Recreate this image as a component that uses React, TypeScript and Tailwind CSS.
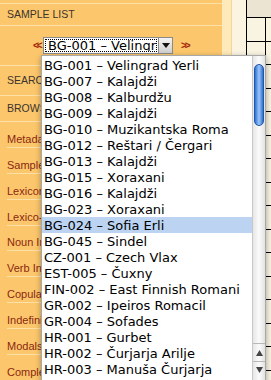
import React from "react";

const samples = [
  "BG-001 – Velingrad Yerli",
  "BG-007 – Kalajdži",
  "BG-008 – Kalburdžu",
  "BG-009 – Kalajdži",
  "BG-010 – Muzikantska Roma",
  "BG-012 – Reštari / Čergari",
  "BG-013 – Kalajdži",
  "BG-015 – Xoraxani",
  "BG-016 – Kalajdži",
  "BG-023 – Xoraxani",
  "BG-024 – Sofia Erli",
  "BG-045 – Sindel",
  "CZ-001 – Czech Vlax",
  "EST-005 – Čuxny",
  "FIN-002 – East Finnish Romani",
  "GR-002 – Ipeiros Romacil",
  "GR-004 – Sofades",
  "HR-001 – Gurbet",
  "HR-002 – Čurjarja Arilje",
  "HR-003 – Manuša Čurjarja",
];

const browse = [
  "Metadata",
  "Samples",
  "Lexicon",
  "Lexico-grammar",
  "Noun Inflection",
  "Verb Inflection",
  "Copula inflection",
  "Indefinites",
  "Modals",
  "Complex clauses",
];

function App() {
  return (
    <div
      className="relative w-[271px] h-[380px] overflow-hidden flex bg-[#f9f3e1]"
      style={{ fontFamily: '"Liberation Sans", Arial, sans-serif' }}
    >
      {/* sidebar */}
      <div className="w-[222px] shrink-0 bg-[#fcc76c] pt-[3px]">
        <div className="h-[23px] border-y border-[#fde0a6] flex items-center px-[7px] text-[10.5px] text-[#3b332c]">
          SAMPLE LIST
        </div>

        <div className="h-[40px] flex items-center pl-[33px] gap-[2px] border-b border-[#fde0a6]">
          <span className="text-[#a3290d] text-[10px] font-bold tracking-[-2px] w-[10px]">&lt;&lt;</span>
          <div className="w-[130px] h-[17px] bg-white border border-[#8a8a8a] flex items-stretch ml-[-2px]">
            <div className="flex-1 overflow-hidden border border-dotted border-black m-[1px] flex items-center pl-[2px] whitespace-nowrap text-[13px] text-black leading-none"
              style={{ fontFamily: '"DejaVu Sans", sans-serif' }}>
              BG-001 – Velingrad Yerli
            </div>
            <div className="w-[14px] bg-gradient-to-b from-[#f4f4f4] to-[#cfcfcf] border-l border-[#8a8a8a] flex items-center justify-center">
              <svg width="8" height="5" viewBox="0 0 8 5"><path d="M0 0h8L4 5z" fill="#111" /></svg>
            </div>
          </div>
          <span className="text-[#a3290d] text-[10px] font-bold tracking-[-2px] ml-[6px]">&gt;&gt;</span>
        </div>

        <div className="h-[30px] flex items-center px-[7px] text-[10.5px] text-[#3b332c] border-b border-[#fde0a6]">
          SEARCH
        </div>
        <div className="h-[26px] flex items-center px-[7px] text-[10.5px] text-[#3b332c] border-b border-[#fde0a6]">
          BROWSE
        </div>

        <div className="px-[7px]">
          {browse.map((b) => (
            <div key={b} className="h-[25.9px] flex items-end border-b border-[#fde0a6] pb-[1px]">
              <span className="text-[11px] leading-[14px] text-[#8b2810] whitespace-nowrap">{b}</span>
            </div>
          ))}
        </div>
      </div>

      {/* stripes */}
      <div className="w-[10px] shrink-0 bg-[#fde9b9] border-r border-[#f4d69a]"></div>
      <div className="w-[15px] shrink-0 bg-[#fbf4e1] border-r border-black"></div>

      {/* table area */}
      <div className="flex-1 flex flex-col">
        <div className="h-[18px] bg-[#ebe4d2] border-b border-black"></div>
        {Array.from({ length: 15 }).map((_, i) => (
          <div key={i} className="h-[23.5px] shrink-0 border-b border-black flex">
            <div className="w-[19px] border-r border-black"></div>
          </div>
        ))}
      </div>

      {/* dropdown popup */}
      <div className="absolute left-[41px] top-[55px] w-[225px] h-[330px] bg-white border border-[#a8a8a8] shadow-[0_2px_6px_rgba(0,0,0,0.35)] flex">
        <div className="flex-1 pt-[1px]" style={{ fontFamily: '"DejaVu Sans", sans-serif' }}>
          {samples.map((s) => (
            <div
              key={s}
              className={
                "h-[16px] flex items-center pl-[2px] text-[13px] text-black whitespace-nowrap leading-none " +
                (s === "BG-024 – Sofia Erli" ? "bg-[#bcd4f2]" : "")
              }
            >
              {s}
            </div>
          ))}
        </div>
        <div className="w-[13px] bg-gradient-to-r from-[#e6e6e6] via-[#fbfbfb] to-[#e2e2e2] border-l border-[#c8c8c8] relative">
          <div className="absolute left-[1px] right-[1px] top-[8px] h-[62px] rounded-full bg-gradient-to-r from-[#2a6fd6] via-[#9cc7f7] to-[#2d6fd0] border border-[#2456a8]"></div>
          <div className="absolute left-0 right-0 top-[287px] h-[1px] bg-[#b8b8b8]"></div>
          <div className="absolute left-0 right-0 top-[290px] h-[14px] flex items-center justify-center">
            <svg width="7" height="6" viewBox="0 0 7 6"><path d="M3.5 0L7 6H0z" fill="#444" /></svg>
          </div>
          <div className="absolute left-0 right-0 top-[305px] h-[1px] bg-[#b8b8b8]"></div>
          <div className="absolute left-0 right-0 top-[307px] h-[14px] flex items-center justify-center">
            <svg width="7" height="6" viewBox="0 0 7 6"><path d="M0 0h7L3.5 6z" fill="#444" /></svg>
          </div>
        </div>
      </div>
    </div>
  );
}

export default App;
